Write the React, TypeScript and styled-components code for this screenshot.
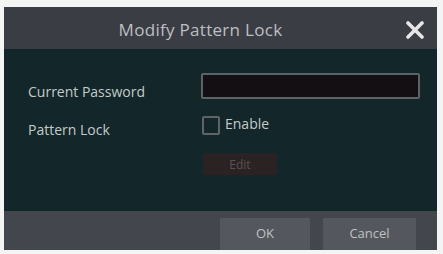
import styled, { createGlobalStyle } from "styled-components";

const GlobalStyle = createGlobalStyle`
  html, body {
    margin: 0;
    padding: 0;
    background: #f4f4f4;
  }
  body {
    font-family: "Open Sans", "Noto Sans", sans-serif;
  }
`;

const Page = styled.div`
  padding: 7px 6px 4px 4px;
`;

const Dialog = styled.div`
  width: 433px;
  height: 243px;
  display: flex;
  flex-direction: column;
  background: #13262a;
  overflow: hidden;
`;

const TitleBar = styled.div`
  height: 42px;
  flex: none;
  background: #3a3d44;
  display: flex;
  align-items: center;
  justify-content: center;
  position: relative;
`;

const Title = styled.div`
  color: #bdbfc2;
  font-size: 17px;
  letter-spacing: 0.3px;
  margin: 3px 40px 0 0;
`;

const CloseButton = styled.button`
  position: absolute;
  right: 11px;
  top: 12px;
  width: 22px;
  height: 22px;
  padding: 0;
  border: none;
  background: transparent;
  display: flex;
  align-items: center;
  justify-content: center;
`;

const Body = styled.div`
  flex: 1;
  display: grid;
  grid-template-columns: 173px 219px;
  grid-auto-rows: auto;
  padding: 24px 0 0 24px;
  align-content: start;
`;

const Label = styled.div<{ $offset: number }>`
  color: #c3cbc8;
  font-size: 14px;
  padding-top: ${(p) => p.$offset}px;
  line-height: 18px;
  margin-bottom: -8px;
`;

const PasswordInput = styled.div`
  height: 26px;
  box-sizing: border-box;
  border: 2px solid #5d6264;
  background: #140f13;
  border-radius: 2px;
`;

const CheckRow = styled.label`
  display: flex;
  align-items: center;
  gap: 5px;
  margin-top: 17px;
  height: 19px;
  margin-left: 1px;
`;

const CheckBox = styled.span`
  width: 18px;
  height: 19px;
  box-sizing: border-box;
  border: 2px solid #5f6466;
  border-radius: 2px;
`;

const CheckText = styled.span`
  color: #c3cbc8;
  font-size: 14px;
  line-height: 19px;
  margin-top: -4px;
`;

const EditButton = styled.div`
  grid-column: 2;
  margin: 18px 0 0 2px;
  width: 74px;
  height: 22px;
  background: #2b2224;
  color: #5a5254;
  font-size: 12px;
  display: flex;
  align-items: center;
  justify-content: center;
  border-radius: 2px;
`;

const Footer = styled.div`
  height: 39px;
  flex: none;
  background: #44464d;
  display: flex;
  justify-content: flex-end;
  align-items: flex-end;
  gap: 13px;
  padding-right: 21px;
`;

const FooterButton = styled.div<{ $width: number }>`
  width: ${(p) => p.$width}px;
  height: 32px;
  background: #54575d;
  color: #c0c2c4;
  font-size: 13px;
  display: flex;
  align-items: center;
  justify-content: center;
  padding-bottom: 2px;
  box-sizing: border-box;
`;

export default function App() {
  return (
    <>
      <GlobalStyle />
      <Page>
        <Dialog>
          <TitleBar>
            <Title>Modify Pattern Lock</Title>
            <CloseButton aria-label="Close">
              <svg width="20" height="18" viewBox="0 0 20 18">
                <path
                  d="M3 2 L17 16 M17 2 L3 16"
                  stroke="#e6e6e8"
                  strokeWidth="3.6"
                  strokeLinecap="round"
                />
              </svg>
            </CloseButton>
          </TitleBar>
          <Body>
            <Label $offset={10}>Current Password</Label>
            <PasswordInput />
            <Label $offset={22}>Pattern Lock</Label>
            <CheckRow>
              <CheckBox />
              <CheckText>Enable</CheckText>
            </CheckRow>
            <EditButton>Edit</EditButton>
          </Body>
          <Footer>
            <FooterButton $width={90}>OK</FooterButton>
            <FooterButton $width={93}>Cancel</FooterButton>
          </Footer>
        </Dialog>
      </Page>
    </>
  );
}
